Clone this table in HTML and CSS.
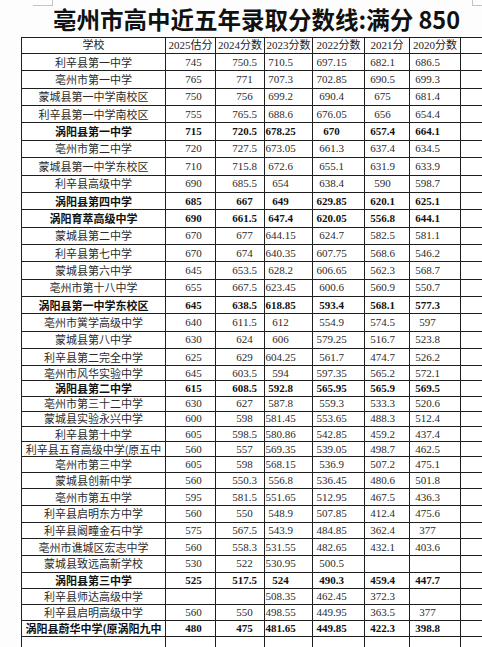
FILE: index.html
```html
<!DOCTYPE html>
<html lang="zh-CN">
<head>
<meta charset="utf-8">
<title>亳州市高中近五年录取分数线</title>
<link rel="stylesheet" href="styles.css">
</head>
<body>
<div class="page">
  <div class="marks"><span class="mark mark-l"></span><span class="mark mark-r"></span></div>
  <h1 class="title">亳州市高中近五年录取分数线:满分 850</h1>
  <div class="sheet">
    <table class="scores">
      <colgroup>
        <col class="c-name"><col class="c-25"><col class="c-24"><col class="c-23"><col class="c-22"><col class="c-21"><col class="c-20"><col class="c-x">
      </colgroup>
      <thead>
        <tr class="hh"><th>学校</th><th>2025估分</th><th>2024分数</th><th>2023分数</th><th>2022分数</th><th>2021分</th><th>2020分数</th><th></th></tr>
      </thead>
      <tbody>
        <tr class="ha"><td>利辛县第一中学</td><td>745</td><td>750.5</td><td>710.5</td><td>697.15</td><td>682.1</td><td>686.5</td><td></td></tr>
        <tr class="ha"><td>亳州市第一中学</td><td>765</td><td>771</td><td>707.3</td><td>702.85</td><td>690.5</td><td>699.3</td><td></td></tr>
        <tr class="ha"><td>蒙城县第一中学南校区</td><td>750</td><td>756</td><td>699.2</td><td>690.4</td><td>675</td><td>681.4</td><td></td></tr>
        <tr class="ha"><td>利辛县第一中学南校区</td><td>755</td><td>765.5</td><td>688.6</td><td>676.05</td><td>656</td><td>654.4</td><td></td></tr>
        <tr class="ha b"><td>涡阳县第一中学</td><td>715</td><td>720.5</td><td>678.25</td><td>670</td><td>657.4</td><td>664.1</td><td></td></tr>
        <tr class="ha"><td>亳州市第二中学</td><td>720</td><td>727.5</td><td>673.05</td><td>661.3</td><td>637.4</td><td>634.5</td><td></td></tr>
        <tr class="ha"><td>蒙城县第一中学东校区</td><td>710</td><td>715.8</td><td>672.6</td><td>655.1</td><td>631.9</td><td>633.9</td><td></td></tr>
        <tr class="ha"><td>利辛县高级中学</td><td>690</td><td>685.5</td><td>654</td><td>638.4</td><td>590</td><td>598.7</td><td></td></tr>
        <tr class="ha b"><td>涡阳县第四中学</td><td>685</td><td>667</td><td>649</td><td>629.85</td><td>620.1</td><td>625.1</td><td></td></tr>
        <tr class="ha b"><td>涡阳育萃高级中学</td><td>690</td><td>661.5</td><td>647.4</td><td>620.05</td><td>556.8</td><td>644.1</td><td></td></tr>
        <tr class="ha"><td>蒙城县第二中学</td><td>670</td><td>677</td><td>644.15</td><td>624.7</td><td>582.5</td><td>581.1</td><td></td></tr>
        <tr class="ha"><td>利辛县第七中学</td><td>670</td><td>674</td><td>640.35</td><td>607.75</td><td>568.6</td><td>546.2</td><td></td></tr>
        <tr class="ha"><td>蒙城县第六中学</td><td>645</td><td>653.5</td><td>628.2</td><td>606.65</td><td>562.3</td><td>568.7</td><td></td></tr>
        <tr class="ha"><td>亳州市第十八中学</td><td>655</td><td>667.5</td><td>623.45</td><td>600.6</td><td>560.9</td><td>550.7</td><td></td></tr>
        <tr class="ha b"><td>涡阳县第一中学东校区</td><td>645</td><td>638.5</td><td>618.85</td><td>593.4</td><td>568.1</td><td>577.3</td><td></td></tr>
        <tr class="ha"><td>亳州市黉学高级中学</td><td>640</td><td>611.5</td><td>612</td><td>554.9</td><td>574.5</td><td>597</td><td></td></tr>
        <tr class="ha"><td>蒙城县第八中学</td><td>630</td><td>624</td><td>606</td><td>579.25</td><td>516.7</td><td>523.8</td><td></td></tr>
        <tr class="ha"><td>利辛县第二完全中学</td><td>625</td><td>629</td><td>604.25</td><td>561.7</td><td>474.7</td><td>526.2</td><td></td></tr>
        <tr class="hb"><td>亳州市风华实验中学</td><td>645</td><td>603.5</td><td>594</td><td>597.35</td><td>565.2</td><td>572.1</td><td></td></tr>
        <tr class="hb b"><td>涡阳县第二中学</td><td>615</td><td>608.5</td><td>592.8</td><td>565.95</td><td>565.9</td><td>569.5</td><td></td></tr>
        <tr class="hb"><td>亳州市第三十二中学</td><td>630</td><td>627</td><td>587.8</td><td>559.3</td><td>533.3</td><td>520.6</td><td></td></tr>
        <tr class="hb"><td>蒙城县实验永兴中学</td><td>600</td><td>598</td><td>581.45</td><td>553.65</td><td>488.3</td><td>512.4</td><td></td></tr>
        <tr class="hb"><td>利辛县第十中学</td><td>605</td><td>598.5</td><td>580.86</td><td>542.85</td><td>459.2</td><td>437.4</td><td></td></tr>
        <tr class="hb"><td>利辛县五育高级中学(原五中</td><td>560</td><td>557</td><td>569.35</td><td>539.05</td><td>498.7</td><td>462.5</td><td></td></tr>
        <tr class="hb"><td>亳州市第三中学</td><td>605</td><td>598</td><td>568.15</td><td>536.9</td><td>507.2</td><td>475.1</td><td></td></tr>
        <tr class="hc"><td>蒙城县创新中学</td><td>560</td><td>550.3</td><td>556.8</td><td>536.45</td><td>480.6</td><td>501.8</td><td></td></tr>
        <tr class="hc"><td>亳州市第五中学</td><td>595</td><td>581.5</td><td>551.65</td><td>512.95</td><td>467.5</td><td>436.3</td><td></td></tr>
        <tr class="hc"><td>利辛县启明东方中学</td><td>560</td><td>550</td><td>548.9</td><td>507.85</td><td>412.4</td><td>475.6</td><td></td></tr>
        <tr class="hc"><td>利辛县阚疃金石中学</td><td>575</td><td>567.5</td><td>543.9</td><td>484.85</td><td>362.4</td><td>377</td><td></td></tr>
        <tr class="hc"><td>亳州市谯城区宏志中学</td><td>560</td><td>558.3</td><td>531.55</td><td>482.65</td><td>432.1</td><td>403.6</td><td></td></tr>
        <tr class="hc"><td>蒙城县致远高新学校</td><td>530</td><td>522</td><td>530.95</td><td>500.5</td><td></td><td></td><td></td></tr>
        <tr class="hd b"><td>涡阳县第三中学</td><td>525</td><td>517.5</td><td>524</td><td>490.3</td><td>459.4</td><td>447.7</td><td></td></tr>
        <tr class="hd"><td>利辛县师达高级中学</td><td></td><td></td><td>508.35</td><td>462.45</td><td>372.3</td><td></td><td></td></tr>
        <tr class="hd"><td>利辛县启明高级中学</td><td>560</td><td>550</td><td>498.55</td><td>449.95</td><td>363.5</td><td>377</td><td></td></tr>
        <tr class="hd b"><td>涡阳县蔚华中学(原涡阳九中</td><td>480</td><td>475</td><td>481.65</td><td>449.85</td><td>422.3</td><td>398.8</td><td></td></tr>
        <tr class="he"><td></td><td></td><td></td><td></td><td></td><td></td><td></td><td></td></tr>
      </tbody>
    </table>
  </div>
</div>
</body>
</html>
```

FILE: styles.css
```css
html, body {
  margin: 0;
  padding: 0;
  background: #ffffff;
  overflow: hidden;
}

.page {
  width: 482px;
  height: 647px;
  overflow: hidden;
  background: #fdfdfd;
}

.marks {
  height: 6px;
  display: flex;
  justify-content: space-between;
  padding-left: 33px;
}

.mark {
  display: block;
  height: 5px;
  border-bottom: 1px solid #c4c4c4;
}

.mark-l {
  width: 19px;
  border-right: 1px solid #c4c4c4;
}

.mark-r {
  width: 9px;
  border-left: 1px solid #c4c4c4;
}

.title {
  margin: 0;
  height: 30.5px;
  padding-left: 53px;
  font: 700 23.5px/26px "Noto Sans CJK SC", "Noto Sans", sans-serif;
  color: #111111;
  white-space: nowrap;
}

.sheet {
  margin-left: 21px;
  width: 461px;
  overflow: hidden;
}

.scores {
  border-collapse: collapse;
  table-layout: fixed;
  width: 499px;
  font-family: "Liberation Serif", "Noto Sans CJK SC", serif;
  font-size: 11px;
  line-height: 13px;
  color: #2b2b2b;
  background: #ffffff;
}

.c-name { width: 144px; }
.c-25 { width: 50px; }
.c-24 { width: 49px; }
.c-23 { width: 48px; }
.c-22 { width: 52px; }
.c-21 { width: 45px; }
.c-20 { width: 51px; }
.c-x { width: 60px; }

.scores th,
.scores td {
  border: 1px solid #1f1f1f;
  padding: 0;
  text-align: center;
  vertical-align: middle;
  white-space: nowrap;
  overflow: hidden;
}

.scores th {
  font-weight: 400;
  color: #222;
}

.scores td:nth-child(1) {
  font-family: "Noto Sans CJK SC", "Liberation Serif", sans-serif;
}

.scores td:nth-child(2) { padding-left: 6px; }
.scores td:nth-child(3) { padding-left: 9px; }
.scores td:nth-child(4) { padding-right: 16px; }
.scores td:nth-child(5) { padding-right: 14px; }
.scores td:nth-child(6) { padding-right: 9px; }
.scores td:nth-child(7) { padding-right: 15px; }

.hh { height: 16.6px; }
.ha { height: 17.35px; }
.hb { height: 15.2px; }
.hc { height: 16.7px; }
.hd { height: 16.2px; }
.he { height: 20px; }

.b td {
  font-weight: 700;
  color: #111;
}
```
